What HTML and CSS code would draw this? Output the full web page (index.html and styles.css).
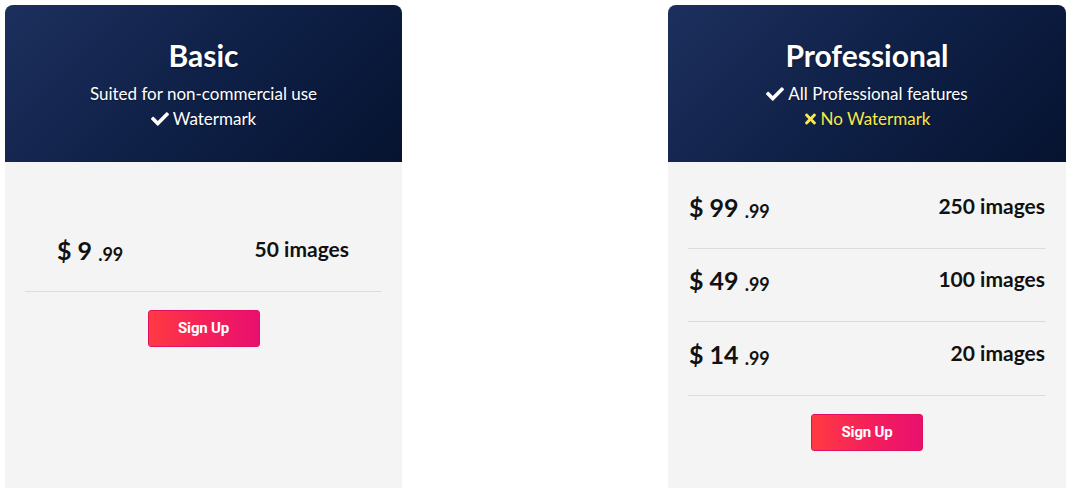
FILE: index.html
```html
<!DOCTYPE html>
<html>
<head>
<meta charset="utf-8">
<link rel="stylesheet" href="styles.css">
</head>
<body>
<div class="page">
  <div class="card">
    <div class="card-head">
      <h2 class="title">Basic</h2>
      <div class="line">Suited for non-commercial use</div>
      <div class="line"><svg class="ico-check" viewBox="0 0 512 512"><path d="M173.9 439.4l-166.4-166.4c-10-10-10-26.2 0-36.2l36.2-36.2c10-10 26.2-10 36.2 0L192 312.7 432.1 72.6c10-10 26.2-10 36.2 0l36.2 36.2c10 10 10 26.2 0 36.2L210.1 439.4c-10 10-26.2 10-36.2 0z"/></svg>Watermark</div>
    </div>
    <div class="card-body body-basic">
      <div class="row row-basic">
        <div class="price">$ 9 <span class="cents">.99</span></div>
        <div class="qty">50 images</div>
      </div>
      <div class="btn-wrap"><button class="btn">Sign Up</button></div>
    </div>
  </div>
  <div class="card">
    <div class="card-head">
      <h2 class="title">Professional</h2>
      <div class="line"><svg class="ico-check" viewBox="0 0 512 512"><path d="M173.9 439.4l-166.4-166.4c-10-10-10-26.2 0-36.2l36.2-36.2c10-10 26.2-10 36.2 0L192 312.7 432.1 72.6c10-10 26.2-10 36.2 0l36.2 36.2c10 10 10 26.2 0 36.2L210.1 439.4c-10 10-26.2 10-36.2 0z"/></svg>All Professional features</div>
      <div class="line yellow"><svg class="ico-x" viewBox="0 0 352 512"><path d="M242.7 256l100.1-100.1c12.3-12.3 12.3-32.2 0-44.5l-22.2-22.2c-12.3-12.3-32.2-12.3-44.5 0L176 189.3 75.9 89.2c-12.3-12.3-32.2-12.3-44.5 0L9.2 111.4c-12.3 12.3-12.3 32.2 0 44.5L109.3 256 9.2 356.1c-12.3 12.3-12.3 32.2 0 44.5l22.2 22.2c12.3 12.3 32.2 12.3 44.5 0L176 322.7l100.1 100.1c12.3 12.3 32.2 12.3 44.5 0l22.2-22.2c12.3-12.3 12.3-32.2 0-44.5L242.7 256z"/></svg>No Watermark</div>
    </div>
    <div class="card-body">
      <div class="row">
        <div class="price">$ 99 <span class="cents">.99</span></div>
        <div class="qty">250 images</div>
      </div>
      <div class="row">
        <div class="price">$ 49 <span class="cents">.99</span></div>
        <div class="qty">100 images</div>
      </div>
      <div class="row">
        <div class="price">$ 14 <span class="cents">.99</span></div>
        <div class="qty">20 images</div>
      </div>
      <div class="btn-wrap"><button class="btn">Sign Up</button></div>
    </div>
  </div>
</div>
</body>
</html>
```

FILE: styles.css
```css
* { box-sizing: border-box; }
html, body { margin: 0; padding: 0; background: #ffffff; }
body { font-family: "Lato", "Noto Sans", sans-serif; color: #111; }

.page {
  display: flex;
  justify-content: space-between;
  padding: 5px 4px 0 5px;
  height: 488px;
}

.card {
  width: 397px;
  display: flex;
  flex-direction: column;
}
.card + .card { width: 398px; }

.card-head {
  background: linear-gradient(135deg, #1d2f5d 0%, #0e1f45 55%, #061330 100%);
  border-radius: 8px 8px 0 0;
  color: #fff;
  text-align: center;
  padding: 32px 10px 31px;
  height: 157px;
}

.title {
  margin: 0 0 8px;
  font-size: 30px;
  line-height: 36px;
  font-weight: 700;
  text-shadow: 0 1px 2px rgba(0,0,0,0.5);
}

.line {
  font-size: 17px;
  line-height: 25px;
  display: flex;
  align-items: center;
  justify-content: center;
  text-shadow: 0 1px 1px rgba(0,0,0,0.4);
}
.yellow { color: #fbe84a; }

.ico-check { width: 18px; height: 18px; fill: #fff; margin-right: 4px; }
.ico-x { width: 13px; height: 16px; fill: #fbe84a; margin-right: 4px; }

.card-body {
  flex: 1;
  background: #f4f4f4;
  padding: 13px 20px 0;
}
.body-basic { padding-top: 56px; }

.row {
  display: flex;
  justify-content: space-between;
  align-items: center;
  padding: 19px 1px 27px;
  height: 73.5px;
  border-bottom: 1px solid #dcdcdc;
}
.row-basic { padding-left: 32px; padding-right: 33px; }

.price {
  font-size: 25px;
  font-weight: 700;
  line-height: 26px;
  padding-top: 2px;
}
.cents { font-size: 18px; position: relative; top: 1px; }

.qty {
  font-size: 21px;
  font-weight: 700;
  line-height: 26px;
  margin-top: -3px;
}

.btn-wrap {
  display: flex;
  justify-content: center;
  padding-top: 18px;
}
.btn {
  width: 112px;
  height: 37px;
  border: 1px solid #e01060;
  border-radius: 3px;
  background: linear-gradient(90deg, #ff3a42 0%, #f5205a 50%, #e8106e 100%);
  color: #fff;
  font-family: "Roboto", "Noto Sans", sans-serif;
  font-weight: 700;
  font-size: 15px;
  letter-spacing: -0.2px;
  cursor: pointer;
}
```
